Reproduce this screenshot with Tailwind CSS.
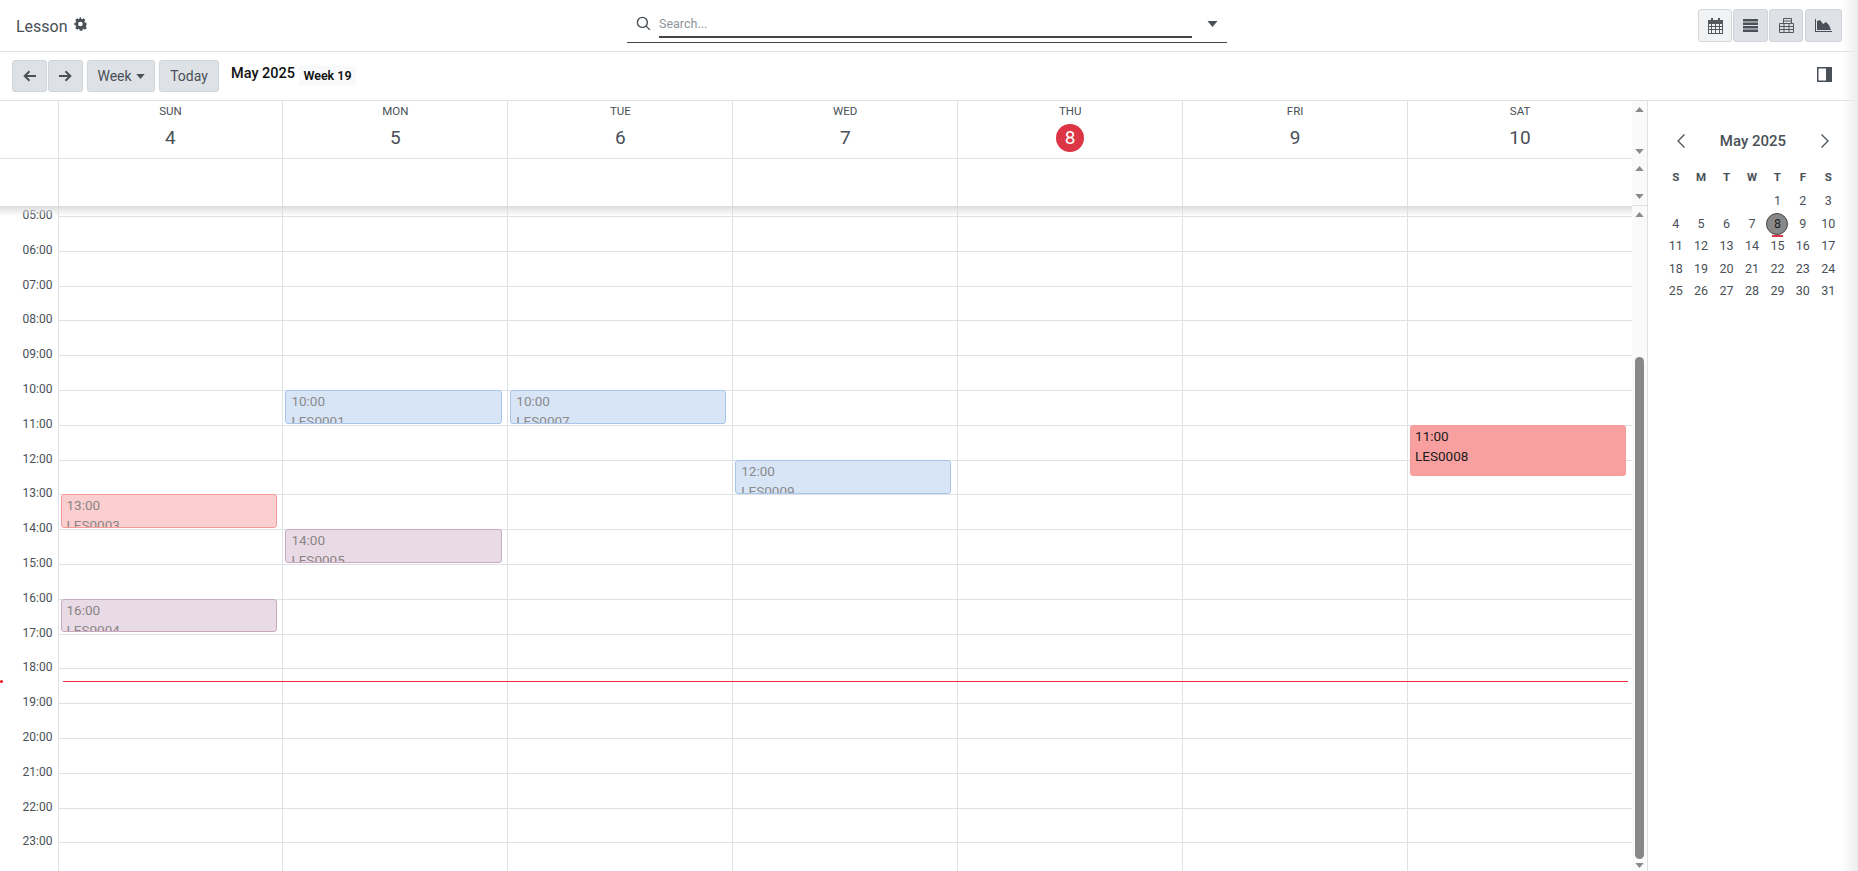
<!DOCTYPE html>
<html lang="en">
<head>
<meta charset="UTF-8">
<title>Lesson</title>
<script src="https://cdn.jsdelivr.net/npm/@tailwindcss/browser@4"></script>
</head>
<body class="bg-white text-[#495057] font-['Roboto',sans-serif]">
<div class="relative h-[871px] w-[1858px] overflow-hidden flex flex-col">

  <!-- Top bar -->
  <header class="h-[52px] shrink-0 border-b border-[#dee2e6] flex items-center pl-4 pr-4 relative">
    <div class="w-[611px] flex items-center gap-[6px]">
      <span class="text-[16px] text-[#495057] mt-[2px]">Lesson</span>
      <svg class="w-[14px] h-[14px] -mt-[3px]" viewBox="0 0 24 24" fill="#495057"><path d="M21.4 14.2v-4.4l-2.9-.5c-.2-.6-.4-1.200-.7-1.700l1.700-2.400-3.100-3.100-2.400 1.700c-.5-.3-1.100-.5-1.700-.7L11.800.6H9.900l-.5 2.500c-.6.200-1.200.4-1.700.7L5.300 2.100 2.200 5.200l1.700 2.400c-.3.500-.5 1.100-.7 1.700L.6 9.800v4.400l2.600.5c.2.600.4 1.200.7 1.700l-1.700 2.400 3.100 3.100 2.400-1.700c.5.3 1.100.5 1.700.7l.5 2.700h4.400l.5-2.700c.6-.2 1.200-.4 1.700-.7l2.400 1.700 3.100-3.100-1.700-2.400c.3-.5.5-1.100.7-1.700zM11 16a4 4 0 1 1 0-8 4 4 0 0 1 0 8z"/></svg>
    </div>
    <div class="relative w-[600px] h-[43px] self-start border-b border-[#444] flex items-start">
      <svg class="w-[15px] h-[15px] ml-[9px] mt-[16px]" viewBox="0 0 16 16" fill="none" stroke="#495057" stroke-width="1.500"><circle cx="6.800" cy="6.800" r="5.300"/><path d="M10.800 10.800l4 4"/></svg>
      <div class="ml-[8px] mt-[14px] w-[533px] h-[24px] border-b-2 border-[#444] text-[12.5px] leading-[20px] text-[#8d949a]">Search...</div>
      <svg class="w-[11px] h-[6px] ml-[15px] mt-[21px]" viewBox="0 0 10 6" fill="#495057"><path d="M0 0h10L5 6z"/></svg>
    </div>
    <div class="ml-auto flex">
      <div class="w-[34px] h-[33px] rounded-[3px] border border-[#d4d6d8] bg-[#f1f2f3] flex items-center justify-center">
        <svg class="w-[15px] h-[16px]" viewBox="0 0 15 16" fill="#55595e"><path fill-rule="evenodd" d="M3 0h2v2h5V0h2v2h3v14H0V2h3zM1 6v2h2V6zm3 0v2h3V6zm4 0v2h3V6zm4 0v2h2V6zM1 9v2h2V9zm3 0v2h3V9zm4 0v2h3V9zm4 0v2h2V9zM1 12v3h2v-3zm3 0v3h3v-3zm4 0v3h3v-3zm4 0v3h2v-3z"/></svg>
      </div>
      <div class="ml-px w-[35px] h-[33px] rounded-[3px] border border-[#ced4da] bg-[#dee2e6] flex items-center justify-center">
        <svg class="w-[15px] h-[13px]" viewBox="0 0 15 13" fill="#495057"><path d="M0 0h15v2.500H0zM0 3.500h15V6H0zM0 7h15v2.500H0zM0 10.500h15V13H0z"/></svg>
      </div>
      <div class="ml-px w-[34px] h-[33px] rounded-[3px] border border-[#ced4da] bg-[#dee2e6] flex items-center justify-center">
        <svg class="w-[15px] h-[15px]" viewBox="0 0 15 15" fill="none" stroke="#55595e"><path d="M.5 5.500h14v9H.5zM.5 8.500h14M.5 11.500h14M5 5.500v9M10 5.500v9M4.500 5.500v-5h8v5M4.500 3h8"/></svg>
      </div>
      <div class="ml-[2px] w-[37px] h-[33px] rounded-[3px] border border-[#ced4da] bg-[#dee2e6] flex items-center justify-center">
        <svg class="w-[17px] h-[13px]" viewBox="0 0 17 13" fill="#495057"><path d="M0 0h1v12h16v1H0z"/><path d="M2 11V2l3-1 3 4 3-2 3 3 2 5z"/></svg>
      </div>
    </div>
  </header>

  <!-- Toolbar -->
  <div class="h-[49px] shrink-0 border-b border-[#dee2e6] flex items-center pl-3 pr-[26px]">
    <div class="flex items-center">
      <button class="w-[35px] h-[32px] rounded-[3px] border border-[#ced4da] bg-[#dee2e6] flex items-center justify-center">
        <svg class="w-[13px] h-[12px]" viewBox="0 0 13 12" fill="none" stroke="#495057" stroke-width="2"><path d="M13 6H2M6.500 1.200L1.700 6l4.800 4.800"/></svg>
      </button>
      <button class="ml-px w-[35px] h-[32px] rounded-[3px] border border-[#ced4da] bg-[#dee2e6] flex items-center justify-center">
        <svg class="w-[13px] h-[12px]" viewBox="0 0 13 12" fill="none" stroke="#495057" stroke-width="2"><path d="M0 6h11M6.500 1.200L11.300 6l-4.800 4.800"/></svg>
      </button>
      <button class="ml-[4px] w-[68px] h-[32px] rounded-[3px] border border-[#ced4da] bg-[#dee2e6] flex items-center justify-center gap-[4px] text-[14px] text-[#495057]">
        Week
        <svg class="w-[9px] h-[5px]" viewBox="0 0 10 6" fill="#495057"><path d="M0 0h10L5 6z"/></svg>
      </button>
      <button class="ml-[4px] w-[60px] h-[32px] rounded-[3px] border border-[#ced4da] bg-[#dee2e6] text-[14px] text-[#495057]">Today</button>
      <span class="ml-[12px] w-[68px] text-[14.5px] font-medium text-[#111] -mt-[4px]">May 2025</span>
      <span class="w-[57px] h-[20px] rounded-[3px] bg-[#f8f9fa] flex items-center justify-center text-[12.5px] font-semibold text-[#111]">Week 19</span>
    </div>
    <svg class="ml-auto w-[15px] h-[15px] -mt-[3px]" viewBox="0 0 15 15"><path fill="#495057" d="M0 0h15v15H0z"/><path fill="#fff" d="M1.500 1.500H9v12H1.500z"/></svg>
  </div>

  <div class="flex-1 flex min-h-0">
    <!-- Calendar -->
    <div class="w-[1647px] shrink-0 flex flex-col min-h-0">

      <!-- Day headers -->
      <div class="h-[58px] shrink-0 flex">
        <div class="w-[1632px] grid grid-cols-[57.5px_repeat(7,1fr)] border-b border-[#dee2e6] text-center">
          <div></div>
          <div class="border-l border-[#dee2e6]"><div class="text-[11.5px] leading-[14px] mt-[3px] text-[#495057]">SUN</div><div class="text-[19px] leading-[28px] mt-[6px]">4</div></div>
          <div class="border-l border-[#dee2e6]"><div class="text-[11.5px] leading-[14px] mt-[3px] text-[#495057]">MON</div><div class="text-[19px] leading-[28px] mt-[6px]">5</div></div>
          <div class="border-l border-[#dee2e6]"><div class="text-[11.5px] leading-[14px] mt-[3px] text-[#495057]">TUE</div><div class="text-[19px] leading-[28px] mt-[6px]">6</div></div>
          <div class="border-l border-[#dee2e6]"><div class="text-[11.5px] leading-[14px] mt-[3px] text-[#495057]">WED</div><div class="text-[19px] leading-[28px] mt-[6px]">7</div></div>
          <div class="border-l border-[#dee2e6]"><div class="text-[11.5px] leading-[14px] mt-[3px] text-[#495057]">THU</div><div class="mx-auto w-[28px] h-[28px] rounded-full bg-[#dc3545] text-white text-[19px] leading-[28px] mt-[6px]">8</div></div>
          <div class="border-l border-[#dee2e6]"><div class="text-[11.5px] leading-[14px] mt-[3px] text-[#495057]">FRI</div><div class="text-[19px] leading-[28px] mt-[6px]">9</div></div>
          <div class="border-l border-[#dee2e6]"><div class="text-[11.5px] leading-[14px] mt-[3px] text-[#495057]">SAT</div><div class="text-[19px] leading-[28px] mt-[6px]">10</div></div>
        </div>
        <div class="w-[15px] bg-[#fafafa] flex flex-col items-center justify-between pt-[6px] pb-[5px]">
          <svg class="w-[9px] h-[5px]" viewBox="0 0 10 6" fill="#8a8a8a"><path d="M0 6h10L5 0z"/></svg>
          <svg class="w-[9px] h-[5px]" viewBox="0 0 10 6" fill="#8a8a8a"><path d="M0 0h10L5 6z"/></svg>
        </div>
      </div>

      <!-- All day row -->
      <div class="h-[47px] shrink-0 flex">
        <div class="w-[1632px] grid grid-cols-[57.5px_repeat(7,1fr)]">
          <div></div>
          <div class="border-l border-[#dee2e6]"></div>
          <div class="border-l border-[#dee2e6]"></div>
          <div class="border-l border-[#dee2e6]"></div>
          <div class="border-l border-[#dee2e6]"></div>
          <div class="border-l border-[#dee2e6]"></div>
          <div class="border-l border-[#dee2e6]"></div>
          <div class="border-l border-[#dee2e6]"></div>
        </div>
        <div class="w-[15px] bg-[#fafafa] border-b border-[#dee2e6] flex flex-col items-center justify-between pt-[7px] pb-[6px]">
          <svg class="w-[9px] h-[5px]" viewBox="0 0 10 6" fill="#8a8a8a"><path d="M0 6h10L5 0z"/></svg>
          <svg class="w-[9px] h-[5px]" viewBox="0 0 10 6" fill="#8a8a8a"><path d="M0 0h10L5 6z"/></svg>
        </div>
      </div>

      <!-- Hour grid -->
      <div class="relative flex-1 flex min-h-0 overflow-hidden">
        <div class="w-[1632px] relative pt-[10px]">
          <div class="h-[34.8px] flex"><div class="w-[57.5px] pr-[5px] text-right text-[12px] leading-[14px] -mt-[8px]">05:00</div><div class="flex-1 border-t border-[#dee2e6]"></div></div>
          <div class="h-[34.8px] flex"><div class="w-[57.5px] pr-[5px] text-right text-[12px] leading-[14px] -mt-[8px]">06:00</div><div class="flex-1 border-t border-[#dee2e6]"></div></div>
          <div class="h-[34.8px] flex"><div class="w-[57.5px] pr-[5px] text-right text-[12px] leading-[14px] -mt-[8px]">07:00</div><div class="flex-1 border-t border-[#dee2e6]"></div></div>
          <div class="h-[34.8px] flex"><div class="w-[57.5px] pr-[5px] text-right text-[12px] leading-[14px] -mt-[8px]">08:00</div><div class="flex-1 border-t border-[#dee2e6]"></div></div>
          <div class="h-[34.8px] flex"><div class="w-[57.5px] pr-[5px] text-right text-[12px] leading-[14px] -mt-[8px]">09:00</div><div class="flex-1 border-t border-[#dee2e6]"></div></div>
          <div class="h-[34.8px] flex"><div class="w-[57.5px] pr-[5px] text-right text-[12px] leading-[14px] -mt-[8px]">10:00</div><div class="flex-1 border-t border-[#dee2e6]"></div></div>
          <div class="h-[34.8px] flex"><div class="w-[57.5px] pr-[5px] text-right text-[12px] leading-[14px] -mt-[8px]">11:00</div><div class="flex-1 border-t border-[#dee2e6]"></div></div>
          <div class="h-[34.8px] flex"><div class="w-[57.5px] pr-[5px] text-right text-[12px] leading-[14px] -mt-[8px]">12:00</div><div class="flex-1 border-t border-[#dee2e6]"></div></div>
          <div class="h-[34.8px] flex"><div class="w-[57.5px] pr-[5px] text-right text-[12px] leading-[14px] -mt-[8px]">13:00</div><div class="flex-1 border-t border-[#dee2e6]"></div></div>
          <div class="h-[34.8px] flex"><div class="w-[57.5px] pr-[5px] text-right text-[12px] leading-[14px] -mt-[8px]">14:00</div><div class="flex-1 border-t border-[#dee2e6]"></div></div>
          <div class="h-[34.8px] flex"><div class="w-[57.5px] pr-[5px] text-right text-[12px] leading-[14px] -mt-[8px]">15:00</div><div class="flex-1 border-t border-[#dee2e6]"></div></div>
          <div class="h-[34.8px] flex"><div class="w-[57.5px] pr-[5px] text-right text-[12px] leading-[14px] -mt-[8px]">16:00</div><div class="flex-1 border-t border-[#dee2e6]"></div></div>
          <div class="h-[34.8px] flex"><div class="w-[57.5px] pr-[5px] text-right text-[12px] leading-[14px] -mt-[8px]">17:00</div><div class="flex-1 border-t border-[#dee2e6]"></div></div>
          <div class="h-[34.8px] flex"><div class="w-[57.5px] pr-[5px] text-right text-[12px] leading-[14px] -mt-[8px]">18:00</div><div class="flex-1 border-t border-[#dee2e6]"></div></div>
          <div class="h-[34.8px] flex"><div class="w-[57.5px] pr-[5px] text-right text-[12px] leading-[14px] -mt-[8px]">19:00</div><div class="flex-1 border-t border-[#dee2e6]"></div></div>
          <div class="h-[34.8px] flex"><div class="w-[57.5px] pr-[5px] text-right text-[12px] leading-[14px] -mt-[8px]">20:00</div><div class="flex-1 border-t border-[#dee2e6]"></div></div>
          <div class="h-[34.8px] flex"><div class="w-[57.5px] pr-[5px] text-right text-[12px] leading-[14px] -mt-[8px]">21:00</div><div class="flex-1 border-t border-[#dee2e6]"></div></div>
          <div class="h-[34.8px] flex"><div class="w-[57.5px] pr-[5px] text-right text-[12px] leading-[14px] -mt-[8px]">22:00</div><div class="flex-1 border-t border-[#dee2e6]"></div></div>
          <div class="h-[34.8px] flex"><div class="w-[57.5px] pr-[5px] text-right text-[12px] leading-[14px] -mt-[8px]">23:00</div><div class="flex-1 border-t border-[#dee2e6]"></div></div>

          <!-- Day columns with events, laid over the hour lines -->
          <div class="absolute inset-y-0 left-[57.5px] right-0 grid grid-cols-7">
            <div class="relative border-l border-[#dee2e6]">
              <a class="absolute left-[2px] right-[5px] top-[288px] h-[34px] overflow-hidden rounded-[3px] border border-[#f59a9a] bg-[#fbcfcf] px-[5px] text-[13.5px] leading-[20px] text-[#8a8484]"><div>13:00</div><div>LES0003</div></a>
              <a class="absolute left-[2px] right-[5px] top-[393px] h-[33px] overflow-hidden rounded-[3px] border border-[#c9a9c1] bg-[#e9dbe5] px-[5px] text-[13.5px] leading-[20px] text-[#8a8484]"><div>16:00</div><div>LES0004</div></a>
            </div>
            <div class="relative border-l border-[#dee2e6]">
              <a class="absolute left-[2px] right-[5px] top-[184px] h-[34px] overflow-hidden rounded-[3px] border border-[#a9c4ea] bg-[#d8e5f7] px-[5px] text-[13.5px] leading-[20px] text-[#8a8a8a]"><div>10:00</div><div>LES0001</div></a>
              <a class="absolute left-[2px] right-[5px] top-[323px] h-[34px] overflow-hidden rounded-[3px] border border-[#c9a9c1] bg-[#e9dbe5] px-[5px] text-[13.5px] leading-[20px] text-[#8a8484]"><div>14:00</div><div>LES0005</div></a>
            </div>
            <div class="relative border-l border-[#dee2e6]">
              <a class="absolute left-[2px] right-[6px] top-[184px] h-[34px] overflow-hidden rounded-[3px] border border-[#a9c4ea] bg-[#d8e5f7] px-[5px] text-[13.5px] leading-[20px] text-[#8a8a8a]"><div>10:00</div><div>LES0007</div></a>
            </div>
            <div class="relative border-l border-[#dee2e6]">
              <a class="absolute left-[2px] right-[6px] top-[254px] h-[34px] overflow-hidden rounded-[3px] border border-[#a9c4ea] bg-[#d8e5f7] px-[5px] text-[13.5px] leading-[20px] text-[#8a8a8a]"><div>12:00</div><div>LES0009</div></a>
            </div>
            <div class="relative border-l border-[#dee2e6]"></div>
            <div class="relative border-l border-[#dee2e6]"></div>
            <div class="relative border-l border-[#dee2e6]">
              <a class="absolute left-[2px] right-[6px] top-[219px] h-[51px] overflow-hidden rounded-[3px] border border-[#f59a9a] bg-[#f8a0a0] px-[4px] text-[13.5px] leading-[20px] text-[#1a1a1a]"><div>11:00</div><div>LES0008</div></a>
            </div>
          </div>

          <!-- Current time -->
          <div class="absolute left-[63px] w-[1565px] top-[475px] h-px bg-[#e8323c]"></div>
          <div class="absolute left-0 top-[474px] w-[3px] h-[3px] rounded-full bg-[#e8101c]"></div>

          <!-- Shadow under the sticky header -->
          <div class="absolute inset-x-0 top-0 h-[10px] bg-linear-to-b from-[#dcdcdc] to-white/0"></div>
        </div>

        <div class="w-[15px] bg-[#fafafa] relative flex flex-col items-center justify-between pt-[6px] pb-[3px]">
          <svg class="w-[9px] h-[5px]" viewBox="0 0 10 6" fill="#8a8a8a"><path d="M0 6h10L5 0z"/></svg>
          <div class="absolute left-[3px] top-[151px] w-[9px] h-[502px] rounded-full bg-[#888]"></div>
          <svg class="w-[9px] h-[5px]" viewBox="0 0 10 6" fill="#8a8a8a"><path d="M0 0h10L5 6z"/></svg>
        </div>
      </div>
    </div>

    <!-- Sidebar -->
    <aside class="flex-1 border-l border-[#dee2e6] pl-[15px] pt-[30px]">
      <div class="w-[178px] h-[20px] flex items-center justify-between pl-[14px] pr-[12px] text-[#495057]">
        <svg class="w-[8px] h-[14px]" viewBox="0 0 8 14" fill="none" stroke="#495057" stroke-width="1.300"><path d="M7.500.5L1 7l6.500 6.500"/></svg>
        <span class="text-[15px] font-medium">May 2025</span>
        <svg class="w-[8px] h-[14px]" viewBox="0 0 8 14" fill="none" stroke="#495057" stroke-width="1.300"><path d="M.5.5L7 7 .5 13.500"/></svg>
      </div>
      <div class="w-[178px] mt-[15px] mb-[2px] grid grid-cols-7 text-center text-[11.5px] leading-[22.4px] font-bold text-[#495057]">
        <div>S</div><div>M</div><div>T</div><div>W</div><div>T</div><div>F</div><div>S</div>
      </div>
      <div class="w-[178px] grid grid-cols-7 auto-rows-[22.4px] text-center text-[12.5px] leading-[22.4px] text-[#495057]">
        <div></div><div></div><div></div><div></div><div>1</div><div>2</div><div>3</div>
        <div>4</div><div>5</div><div>6</div><div>7</div>
        <div class="relative"><div class="mx-auto w-[22px] h-[22px] rounded-full bg-[#888] border border-[#444] leading-[20px] text-[#222]">8</div><div class="absolute left-[7px] top-[22.500px] w-[11px] h-[2px] bg-[#dc3545]"></div></div>
        <div>9</div><div>10</div>
        <div>11</div><div>12</div><div>13</div><div>14</div><div>15</div><div>16</div><div>17</div>
        <div>18</div><div>19</div><div>20</div><div>21</div><div>22</div><div>23</div><div>24</div>
        <div>25</div><div>26</div><div>27</div><div>28</div><div>29</div><div>30</div><div>31</div>
      </div>
    </aside>
  </div>

  <!-- Faint shade along the right edge -->
  <div class="absolute inset-y-0 right-0 w-[16px] bg-linear-to-r from-white/0 to-[#ececec] pointer-events-none"></div>
</div>
</body>
</html>
